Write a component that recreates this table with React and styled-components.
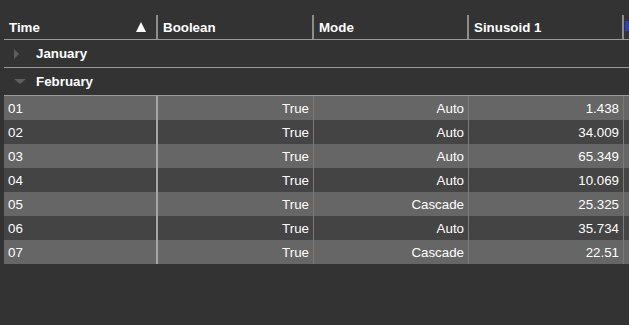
import React from 'react'
import styled, { createGlobalStyle } from 'styled-components'

const GlobalStyle = createGlobalStyle`
    html, body {
        margin:0;
        padding:0;
        background:#333333;
        overflow:hidden;
    }
    body {
        width:629px;
        height:325px;
        font-family:"Liberation Sans", Arial, sans-serif;
    }
`

const columns = [
    { key: 'time', title: 'Time', width: 154, align: 'left', sorted: true },
    { key: 'bool', title: 'Boolean', width: 156, align: 'right' },
    { key: 'mode', title: 'Mode', width: 155, align: 'right' },
    { key: 'sin', title: 'Sinusoid 1', width: 155, align: 'right' },
    { key: 'next', title: '', width: 155, align: 'right', marker: true },
]

const rows = [
    ['01', 'True', 'Auto', '1.438'],
    ['02', 'True', 'Auto', '34.009'],
    ['03', 'True', 'Auto', '65.349'],
    ['04', 'True', 'Auto', '10.069'],
    ['05', 'True', 'Cascade', '25.325'],
    ['06', 'True', 'Auto', '35.734'],
    ['07', 'True', 'Cascade', '22.51'],
]

const template = columns.map(c => `${c.width}px`).join(' ')

const App = () => {
    return (
        <>
            <GlobalStyle />
            <Page>
                <Grid>
                    <HeaderRow>
                        {columns.map(col => (
                            <HeaderCell key={col.key}>
                                {col.title}
                                {col.sorted && (
                                    <SortIcon width="10" height="10" viewBox="0 0 10 10">
                                        <polygon points="5,0 10,10 0,10" fill="#ffffff" />
                                    </SortIcon>
                                )}
                                {col.marker && <Marker />}
                            </HeaderCell>
                        ))}
                    </HeaderRow>

                    <GroupRow>
                        <CaretBox>
                            <svg width="6" height="10" viewBox="0 0 6 10">
                                <polygon points="0,0 5,5 0,10" fill="#5e5e5e" />
                            </svg>
                        </CaretBox>
                        January
                    </GroupRow>
                    <GroupRow>
                        <CaretBox>
                            <svg width="12" height="6" viewBox="0 0 12 6">
                                <polygon points="0,0 12,0 6,5" fill="#5e5e5e" />
                            </svg>
                        </CaretBox>
                        February
                    </GroupRow>

                    {rows.map((row, i) => (
                        <DataRow key={row[0]} odd={i % 2 === 0}>
                            {columns.map((col, c) => (
                                <Cell key={col.key} align={col.align} first={c === 0}>
                                    {row[c] || ''}
                                </Cell>
                            ))}
                        </DataRow>
                    ))}
                </Grid>
            </Page>
        </>
    )
}

export default App

const Page = styled.div`
    padding:15px 0 0 4px;
    width:625px;
    overflow:hidden;
`

const Grid = styled.div`
    width:${columns.reduce((s, c) => s + c.width, 0)}px;
    display:flex;
    flex-direction:column;
`

const HeaderRow = styled.div`
    display:grid;
    grid-template-columns:${template};
    height:24px;
    border-bottom:1px solid #9a9a9a;
`

const HeaderCell = styled.div`
    position:relative;
    display:flex;
    align-items:center;
    justify-content:space-between;
    padding:1px 10px 0 5px;
    color:#ffffff;
    font-size:13.33px;
    font-weight:bold;
    border-right:2px solid #8c8c8c;
    box-sizing:border-box;
`

const SortIcon = styled.svg`
    display:block;
    margin-top:-2px;
`

const Marker = styled.span`
    position:absolute;
    left:1px;
    top:6px;
    width:4px;
    height:10px;
    background:#2b3fc4;
`

const GroupRow = styled.div`
    display:flex;
    align-items:center;
    height:27px;
    border-bottom:1px solid #9a9a9a;
    color:#ffffff;
    font-size:13.33px;
    font-weight:bold;
    padding-left:10px;
`

const CaretBox = styled.span`
    display:flex;
    align-items:center;
    width:22px;
    svg {
        display:block;
    }
`

const DataRow = styled.div`
    display:grid;
    grid-template-columns:${template};
    height:24px;
    background:${props => (props.odd ? '#666666' : '#444444')};
`

const Cell = styled.div`
    display:flex;
    align-items:center;
    justify-content:${props => (props.align === 'right' ? 'flex-end' : 'flex-start')};
    padding:0 ${props => (props.align === 'right' ? '4px' : '0')} 0 4px;
    color:#ffffff;
    font-size:13.33px;
    box-sizing:border-box;
    border-right:${props => (props.first ? '2px solid #a6a6a6' : '1px solid #7a7a7a')};
`
